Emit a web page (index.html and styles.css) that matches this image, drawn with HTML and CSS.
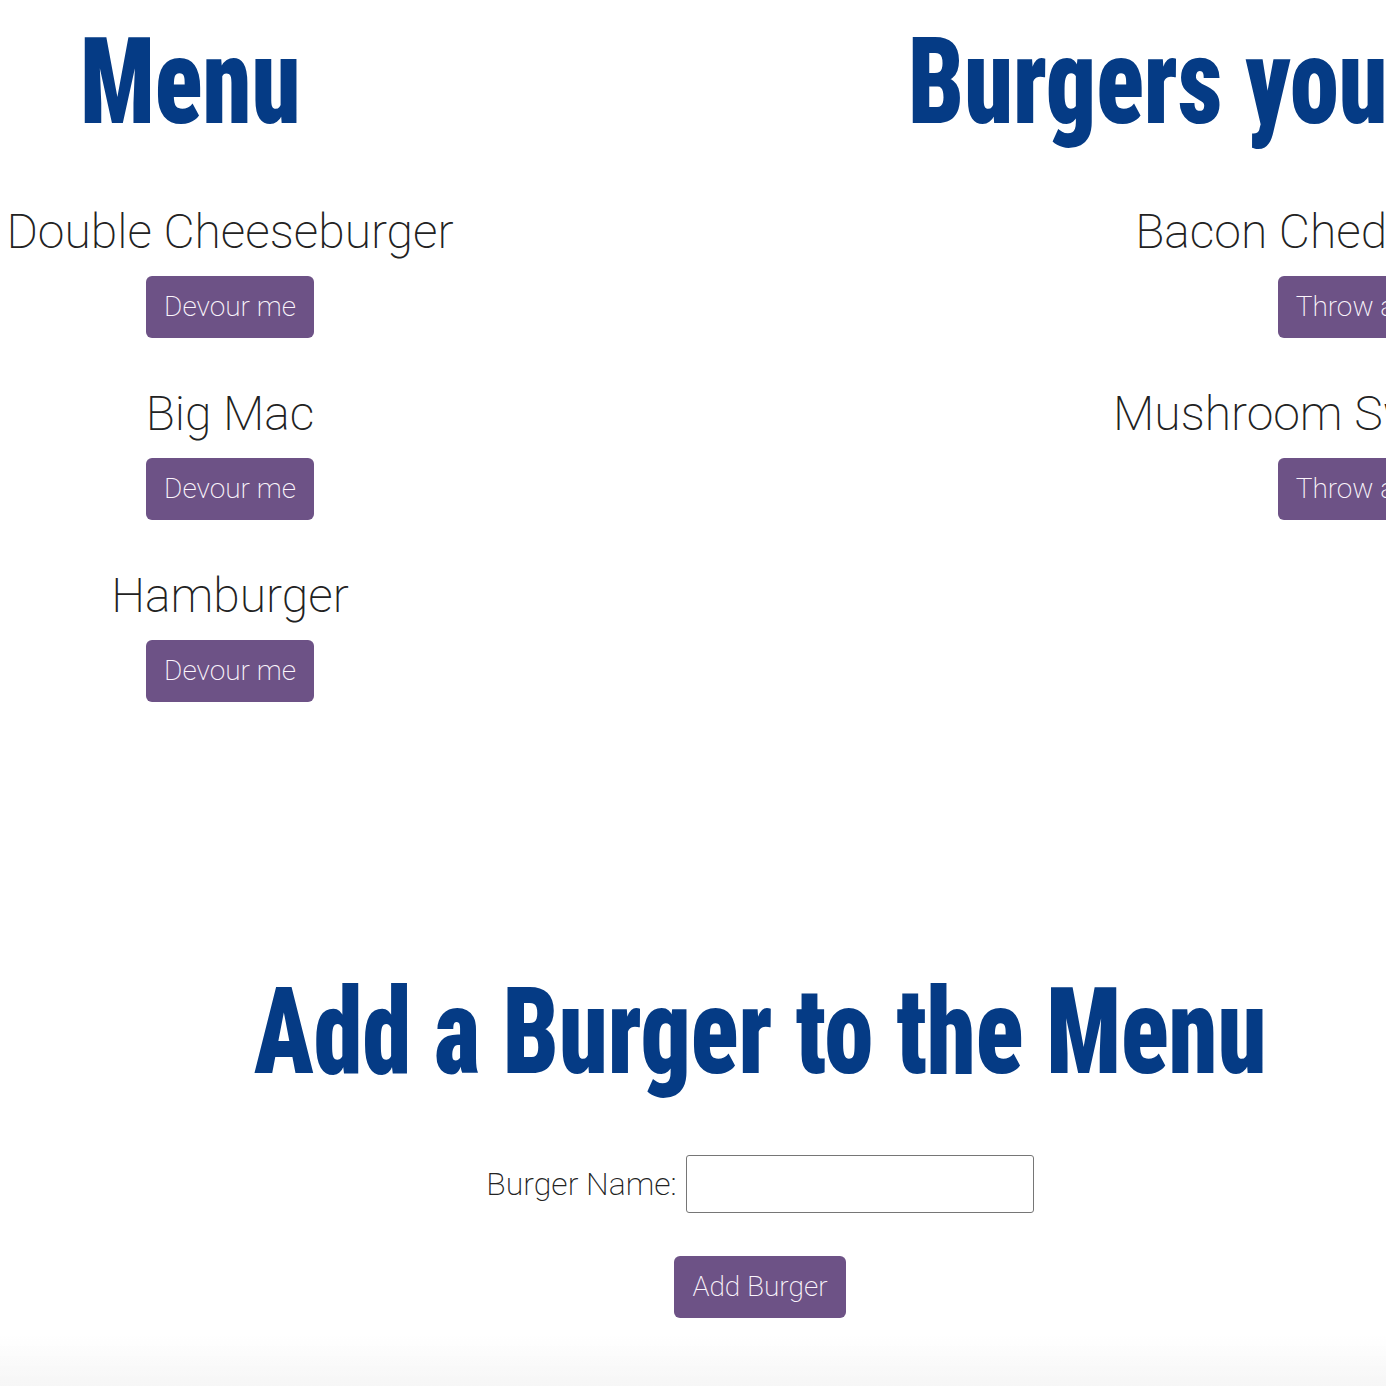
FILE: index.html
```html
<!DOCTYPE html>
<html lang="en">
<head>
<meta charset="utf-8">
<title>Eat-Da-Burger</title>
<link rel="stylesheet" href="styles.css">
</head>
<body>
<div class="page">
  <div class="columns">
    <section class="col col-menu">
      <h1 class="title title-left">Menu</h1>
      <ul class="burger-list">
        <li class="burger">
          <p class="burger-name">Double Cheeseburger</p>
          <button class="btn" type="button">Devour me</button>
        </li>
        <li class="burger">
          <p class="burger-name">Big Mac</p>
          <button class="btn" type="button">Devour me</button>
        </li>
        <li class="burger">
          <p class="burger-name">Hamburger</p>
          <button class="btn" type="button">Devour me</button>
        </li>
      </ul>
    </section>
    <section class="col col-eaten">
      <h1 class="title title-left">Burgers you've Devoured</h1>
      <ul class="burger-list">
        <li class="burger">
          <p class="burger-name">Bacon Cheddar Burger</p>
          <button class="btn" type="button">Throw away</button>
        </li>
        <li class="burger">
          <p class="burger-name">Mushroom Swiss Burger</p>
          <button class="btn" type="button">Throw away</button>
        </li>
      </ul>
    </section>
  </div>
  <section class="add-section">
    <h1 class="title title-center">Add a Burger to the Menu</h1>
    <form class="add-form">
      <div class="form-row">
        <label class="form-label" for="burger-name">Burger Name:</label>
        <input class="form-input" id="burger-name" type="text">
      </div>
      <button class="btn" type="button">Add Burger</button>
    </form>
  </section>
</div>
<div class="bottom-fade"></div>
</body>
</html>
```
FILE: styles.css
```css
html, body {
  margin: 0;
  padding: 0;
  background: #ffffff;
}
body {
  overflow-x: hidden;
  font-family: Roboto, "Noto Sans", sans-serif;
  font-weight: 200;
  color: #222222;
}
.page {
  width: 1520px;
}
.columns {
  display: flex;
  align-items: flex-start;
}
.col-menu {
  width: 460px;
  flex: none;
}
.col-eaten {
  width: 1084px;
  margin-left: 368px;
  flex: none;
}
.title {
  margin: 0;
  padding-top: 22px;
  font-family: Roboto, sans-serif;
  font-weight: 900;
  font-stretch: 75%;
  font-size: 121px;
  line-height: 121px;
  color: #053b85;
  white-space: nowrap;
}
.title-left {
  padding-left: 80px;
  transform: scaleX(0.815);
  transform-origin: 80px 0;
}
.title-center {
  padding-top: 0;
  text-align: center;
  transform: scaleX(0.815);
  transform-origin: 50% 0;
}
.burger-list {
  list-style: none;
  margin: 0;
  padding: 61px 0 0 0;
  display: flex;
  flex-direction: column;
  align-items: center;
  gap: 48px;
}
.burger {
  display: flex;
  flex-direction: column;
  align-items: center;
  gap: 16px;
}
.burger-name {
  margin: 0;
  font-size: 48px;
  line-height: 56px;
  white-space: nowrap;
}
.btn {
  font-family: Roboto, sans-serif;
  font-weight: 200;
  font-size: 28px;
  line-height: 32px;
  padding: 15px 18px;
  border: none;
  border-radius: 6px;
  background: #6d5286;
  color: #fbf5fc;
  white-space: nowrap;
  cursor: pointer;
}
.add-section {
  margin-top: 270px;
  display: flex;
  flex-direction: column;
  align-items: center;
}
.add-form {
  margin-top: 62px;
  display: flex;
  flex-direction: column;
  align-items: center;
  gap: 43px;
}
.form-row {
  display: flex;
  align-items: center;
  gap: 9px;
}
.form-label {
  font-size: 32px;
  line-height: 36px;
}
.form-input {
  box-sizing: border-box;
  width: 348px;
  height: 58px;
  border: 1px solid #767676;
  border-radius: 3px;
  padding: 0 8px;
  font-family: Roboto, sans-serif;
  font-size: 24px;
}
.bottom-fade {
  position: fixed;
  left: 0;
  right: 0;
  bottom: 0;
  height: 50px;
  background: linear-gradient(to bottom, rgba(246, 246, 246, 0), #f6f6f6);
  pointer-events: none;
}
```
